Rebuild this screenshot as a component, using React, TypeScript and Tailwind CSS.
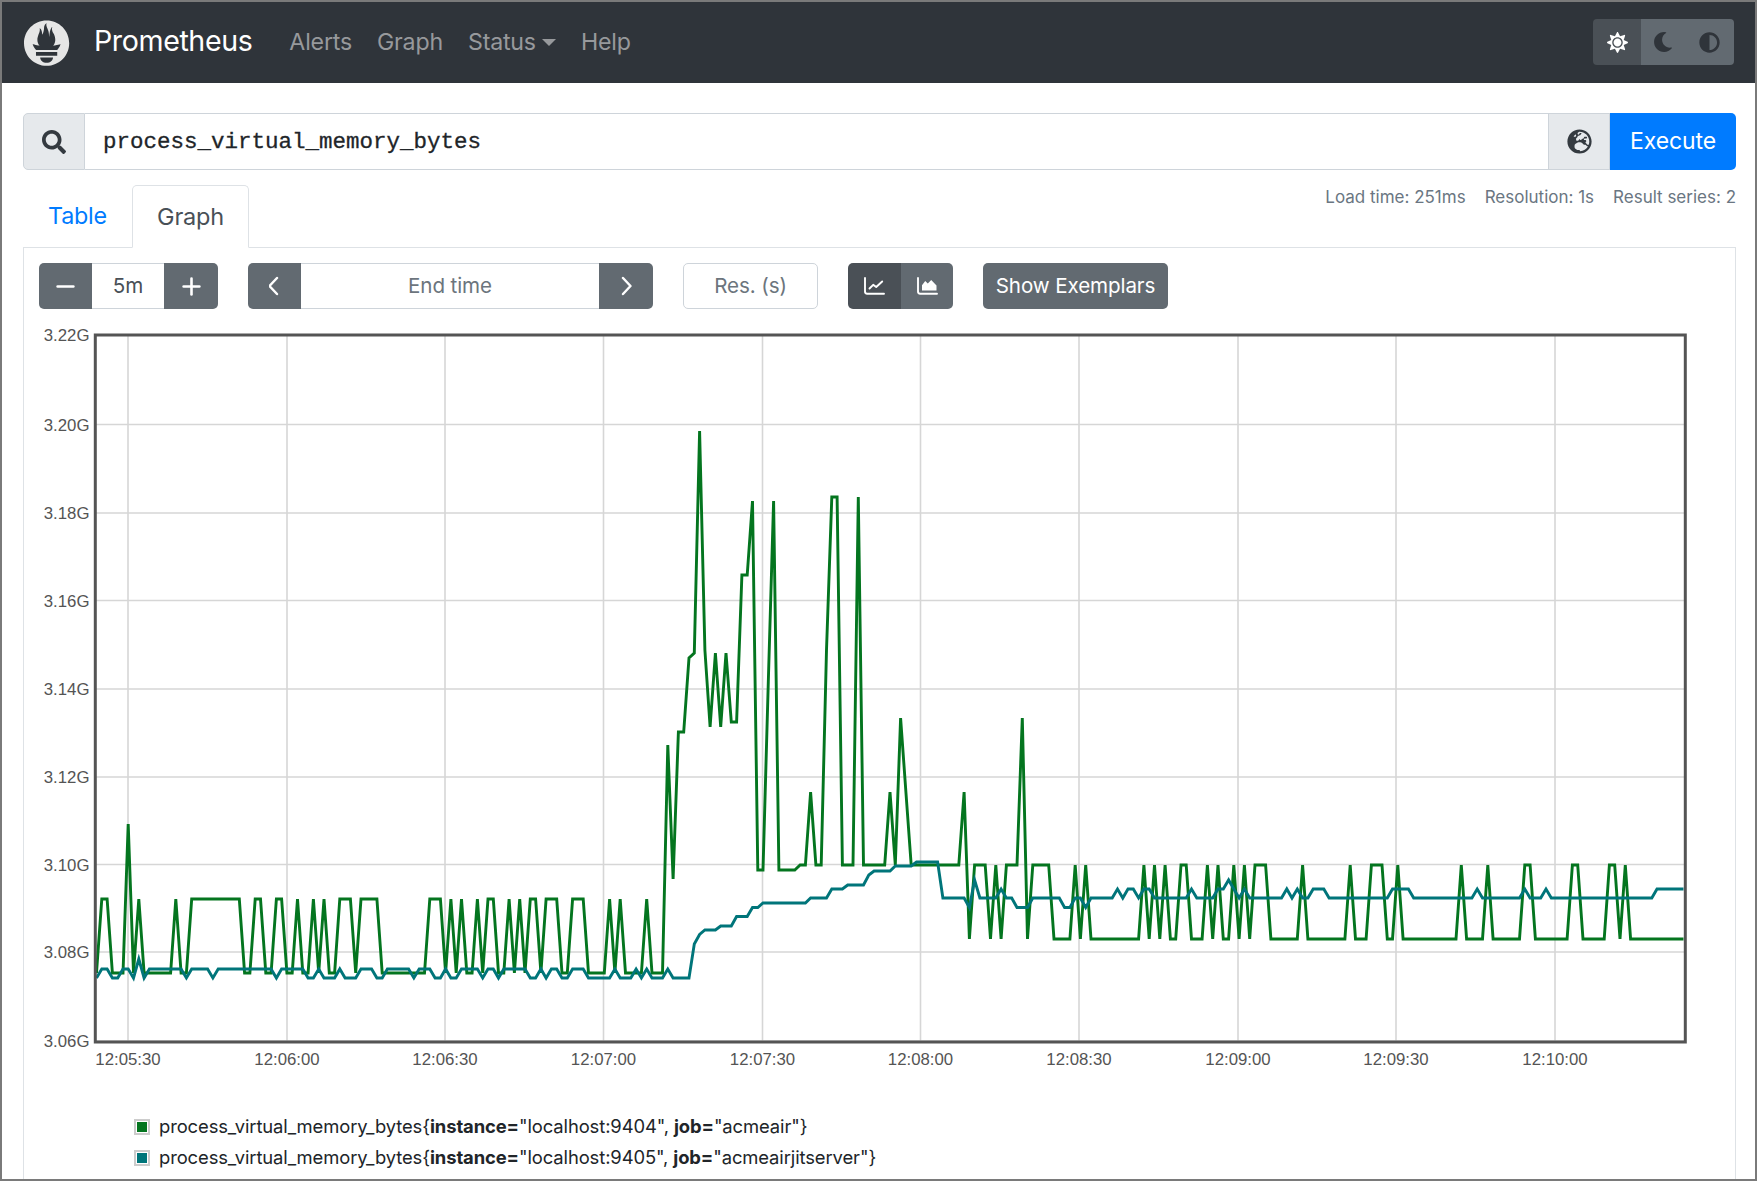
import { Minus, Plus } from "lucide-react";
import { FaAdjust, FaGlobeEurope, FaMoon, FaSearch, FaSun } from "react-icons/fa";

// y pixel per second, "y*n" repeats a sample n times
const greenData =
  "972 898*2 972*3 823 972 898 972*6 898 972*2 898*10 972*2 898*2 972*2 898*2 972*2 898 972*2 898 972 898 972*2 898*3 972 898*4 972*9 898*3 " +
  "972 898 972 898 972*2 898 972 898*2 972*2 898 972 898 972 898*2 972 898*3 972*2 898*3 972*4 898 972 898 972*4 898 972*3 " +
  "744 878 731*2 657 652 430 649 726 652 726 652 721*2 574*2 500 869*2 681 500 869*4 864*2 791 864*2 649 496*2 864*3 496 864*5 791 864 717 791 864*10 791 938 " +
  "864*3 938 864 938 864*3 717 938 864*4 938*4 864 938 864 938*10 864 938 864 938 864 938*2 864*2 938*3 864 938 864 938*2 864 938 864 938 864*3 938*6 864 938*8 " +
  "864 938*3 864*3 938*2 864 938*11 864 938*4 864 938*6 864*2 938*7 864*2 938*5 864*2 938 864 938*11";

const tealData =
  "977 968*2 977*2 968*2 977 958 977 968*7 977 968*4 977 968*11 977 968*5 977*2 968 977*3 968 977*3 968*3 977*2 968*5 977 968*3 977*2 968 977*2 968*4 977 968*2 977 968*5 " +
  "977*2 968 977 968*2 977*2 968*3 977*5 968 977*3 968 977 968 977*3 968 977*4 " +
  "943 933.5 929*3 925*3 915.5*3 906.5*2 902*9 897*4 888*3 884*4 874 870*4 865*4 861*5 897*5 906.5 879 897*4 888 897*2 906.5*3 897*6 906.5*2 897*2 906.5 897*5 " +
  "888 897 888*2 897 888*2 897*7 888 897*4 888*2 879 888 897 888 897*7 888 897 888 897*2 888*3 897*12 888*4 897*12 888 897*8 888 897*3 888 897*20 888*6";

function toPoints(data: string) {
  const ys = data.split(" ").flatMap((tok) => {
    const [y, n] = tok.split("*");
    return Array(Number(n ?? 1)).fill(Number(y)) as number[];
  });
  return ys.map((y, i) => `${Math.min(96.5 + 5.29 * i, 1684.5).toFixed(1)},${y}`).join(" ");
}

const xTicks = [
  { x: 128, label: "12:05:30" },
  { x: 287, label: "12:06:00" },
  { x: 445, label: "12:06:30" },
  { x: 603.5, label: "12:07:00" },
  { x: 762.5, label: "12:07:30" },
  { x: 920.5, label: "12:08:00" },
  { x: 1079, label: "12:08:30" },
  { x: 1238, label: "12:09:00" },
  { x: 1396, label: "12:09:30" },
  { x: 1555, label: "12:10:00" },
];

const yTicks = [
  { y: 334, label: "3.22G" },
  { y: 423.5, label: "3.20G" },
  { y: 512, label: "3.18G" },
  { y: 599.5, label: "3.16G" },
  { y: 688, label: "3.14G" },
  { y: 776, label: "3.12G" },
  { y: 863.5, label: "3.10G" },
  { y: 951, label: "3.08G" },
  { y: 1040, label: "3.06G" },
];

function Logo() {
  return (
    <svg viewBox="0 0 115.333 114" className="w-[46px] h-[46px] shrink-0">
      <path
        fill="#e6e6e6"
        d="M56.667.667C25.372.667 0 26.036 0 57.332c0 31.295 25.372 56.666 56.667 56.666s56.666-25.371 56.666-56.666C113.333 26.036 87.961.667 56.667.667zm0 106.055c-8.904 0-16.123-5.948-16.123-13.283H72.79c0 7.334-7.219 13.283-16.123 13.283zM83.297 89.04H30.034v-9.658h53.264v9.658zm-.191-14.629H30.186c-.176-.203-.356-.403-.526-.609-5.452-6.62-6.736-10.076-7.983-13.598-.021-.116 6.611 1.355 11.314 2.413 0 0 2.42.56 5.958 1.205-3.397-3.982-5.414-9.044-5.414-14.218 0-11.359 8.712-21.285 5.569-29.308 3.059.249 6.331 6.456 6.552 16.161 3.252-4.494 4.613-12.701 4.613-17.733 0-5.21 3.433-11.262 6.867-11.469-3.061 5.045.793 9.37 4.219 20.099 1.285 4.03 1.121 10.812 2.113 15.113.329-8.933 1.865-21.967 7.532-26.467-2.5 5.667.37 12.758 2.333 16.167 3.167 5.5 5.087 9.667 5.087 17.548 0 5.284-1.951 10.259-5.242 14.148 3.742-.702 6.326-1.335 6.326-1.335l12.152-2.371c.001-.001-1.765 7.261-8.55 14.254z"
      />
    </svg>
  );
}

function Chevron({ d }: { d: string }) {
  return (
    <svg viewBox="0 0 12 20" className="w-[12px] h-[20px]" fill="none" stroke="currentColor" strokeWidth={2.4} strokeLinecap="round" strokeLinejoin="round">
      <path d={d} />
    </svg>
  );
}

function LineIcon() {
  return (
    <svg viewBox="0 0 21 18" className="w-[21px] h-[18px]" fill="none" stroke="currentColor" strokeWidth={1.9} strokeLinecap="round" strokeLinejoin="round">
      <path d="M1 1v13.5a2.2 2.2 0 0 0 2.2 2.2H20" />
      <path d="M5.5 11.5l3.7-3.7 3 2.2 6-5.5" />
    </svg>
  );
}

function AreaIcon() {
  return (
    <svg viewBox="0 0 21 18" className="w-[21px] h-[18px]">
      <path d="M1 1v13.5a2.2 2.2 0 0 0 2.2 2.2H20" fill="none" stroke="currentColor" strokeWidth={1.9} strokeLinecap="round" />
      <path d="M5 13.5V8.2L8.2 4l2.6 2.4L14.2 3 19.5 8.5v5z" fill="currentColor" />
    </svg>
  );
}

function Chart() {
  return (
    <svg viewBox="24 325 1700 770" className="block w-[1700px] h-[770px] mt-[17px] shrink-0">
      {xTicks.map((t) => (
        <line key={t.label} x1={t.x} x2={t.x} y1={334} y2={1041} stroke="#d6d6d6" strokeWidth={1.6} />
      ))}
      {yTicks.map((t) => (
        <line key={t.label} x1={95} x2={1685} y1={t.y} y2={t.y} stroke="#d6d6d6" strokeWidth={1.6} />
      ))}
      <polyline points={toPoints(greenData)} fill="none" stroke="#04751f" strokeWidth={2.9} strokeLinejoin="miter" strokeMiterlimit={6} />
      <polyline points={toPoints(tealData)} fill="none" stroke="#00757a" strokeWidth={2.9} strokeLinejoin="miter" strokeMiterlimit={6} />
      <rect x={95.3} y={334} width={1590} height={707} fill="none" stroke="#545454" strokeWidth={3} />
      <g fontFamily="'Liberation Sans', Arial, sans-serif" fontSize={16.8} fill="#545454">
        {yTicks.map((t) => (
          <text key={t.label} x={89.5} y={t.y + 2} textAnchor="end" dominantBaseline="middle">{t.label}</text>
        ))}
        {xTicks.map((t) => (
          <text key={t.label} x={t.x} y={1060} textAnchor="middle" dominantBaseline="middle">{t.label}</text>
        ))}
      </g>
    </svg>
  );
}

function LegendRow({ color, port, job }: { color: string; port: string; job: string }) {
  return (
    <div className="flex items-center h-[31px]">
      <span className="w-4 h-4 border-2 border-[#cccccc] p-px mr-[9px] flex shrink-0">
        <span className={`flex-1 ${color}`} />
      </span>
      <span>
        process_virtual_memory_bytes{"{"}<b>instance=</b>"localhost:{port}", <b>job=</b>"{job}"{"}"}
      </span>
    </div>
  );
}

export default function App() {
  const btn = "bg-[#626a71] text-white flex items-center justify-center";
  return (
    <div className="h-[1181px] border-2 border-[#7a7a7a] overflow-hidden bg-white font-['Inter','Liberation_Sans',sans-serif] text-[#212529]">
      {/* navbar */}
      <nav className="h-[81px] bg-[#2f343a] flex items-center pl-[22px] pr-[21px]">
        <Logo />
        <span className="ml-[24px] -mt-[3px] text-[28.6px] tracking-[-0.4px] text-white">Prometheus</span>
        <div className="ml-[37px] flex items-center gap-[25px] text-[23.2px] text-[#97999c] tracking-[-0.2px]">
          <span>Alerts</span>
          <span>Graph</span>
          <span className="flex items-center">
            Status
            <span className="ml-[6px] w-0 h-0 border-x-[7px] border-x-transparent border-t-[7px] border-t-[#97999c]" />
          </span>
          <span>Help</span>
        </div>
        <div className="ml-auto flex h-[46px] w-[141px] -mt-[1px] rounded-[4px] overflow-hidden">
          <div className="w-[48px] bg-[#4a5056] flex items-center justify-center text-white">
            <FaSun size={21} />
          </div>
          <div className="flex-1 bg-[#626a71] flex items-center gap-[26px] pl-[12px] text-[#2f343a]">
            <FaMoon size={20} />
            <FaAdjust size={21} />
          </div>
        </div>
      </nav>

      <main className="pt-[30px] pl-[21px] pr-[19px]">
        {/* expression input */}
        <div className="flex h-[57px]">
          <div className="w-[62px] bg-[#e6e9ec] border border-[#ced4da] rounded-l-[5px] flex items-center justify-center text-[#343a40]">
            <FaSearch size={24} />
          </div>
          <div className="flex-1 border-y border-[#ced4da] flex items-center pl-[18px] pt-[2px] font-['Liberation_Mono',monospace] text-[22.5px] text-[#212529] [-webkit-text-stroke:0.3px_#212529]">
            process_virtual_memory_bytes
          </div>
          <div className="w-[62px] bg-[#e6e9ec] border border-[#ced4da] flex items-center justify-center text-[#343a40]">
            <FaGlobeEurope size={25} />
          </div>
          <div className="w-[126px] bg-[#007bff] text-white text-[23px] tracking-[-0.1px] rounded-r-[5px] flex items-center justify-center">
            Execute
          </div>
        </div>

        {/* tabs and stats */}
        <div className="relative mt-[15px] h-[63px] flex items-end border-b border-[#dee2e6]">
          <div className="w-[109px] h-[62px] pl-[25px] pt-[1px] flex items-center text-[23.3px] tracking-[-0.2px] text-[#007bff]">Table</div>
          <div className="w-[117px] h-[63px] -mb-px bg-white border border-[#dee2e6] border-b-white rounded-t-[5px] flex items-center justify-center text-[23.5px] tracking-[-0.2px] text-[#495057]">
            Graph
          </div>
          <div className="ml-auto self-start flex gap-[19px] text-[17px] leading-[24px] text-[#6a7682]">
            <span>Load time: 251ms</span>
            <span>Resolution: 1s</span>
            <span>Result series: 2</span>
          </div>
        </div>

        {/* graph panel */}
        <div className="border-x border-[#dee2e6] h-[940px]">
          <div className="pt-[15px] pl-[15px] flex text-[20.6px] tracking-[-0.1px] h-[61px]">
            <div className="flex w-[179px]">
              <div className={`w-[53px] rounded-l-[5px] ${btn}`}><Minus size={27} strokeWidth={2.3} /></div>
              <div className="flex-1 border-y border-[#ced4da] flex items-center justify-center text-[#495057]">5m</div>
              <div className={`w-[54px] rounded-r-[5px] ${btn}`}><Plus size={27} strokeWidth={2.3} /></div>
            </div>
            <div className="flex w-[405px] ml-[30px]">
              <div className={`w-[53px] rounded-l-[5px] ${btn}`}><Chevron d="M8 2 .5 10 8 18" /></div>
              <div className="flex-1 border-y border-[#ced4da] flex items-center justify-center text-[#6c757d]">End time</div>
              <div className={`w-[54px] rounded-r-[5px] ${btn}`}><Chevron d="M3 2l7.5 8L3 18" /></div>
            </div>
            <div className="w-[135px] ml-[30px] border border-[#ced4da] rounded-[5px] flex items-center justify-center text-[#6c757d]">Res. (s)</div>
            <div className="flex w-[105px] ml-[30px] rounded-[5px] overflow-hidden">
              <div className="w-[53px] bg-[#4a5056] text-white flex items-center justify-center"><LineIcon /></div>
              <div className={`flex-1 ${btn}`}><AreaIcon /></div>
            </div>
            <div className={`w-[185px] ml-[30px] rounded-[5px] ${btn}`}>Show Exemplars</div>
          </div>

          <Chart />

          <div className="pl-[110px] mt-[15px] text-[18.4px] tracking-[-0.1px] text-[#212529]">
            <LegendRow color="bg-[#04751f]" port="9404" job="acmeair" />
            <LegendRow color="bg-[#00757a]" port="9405" job="acmeairjitserver" />
          </div>
        </div>
      </main>
    </div>
  );
}
